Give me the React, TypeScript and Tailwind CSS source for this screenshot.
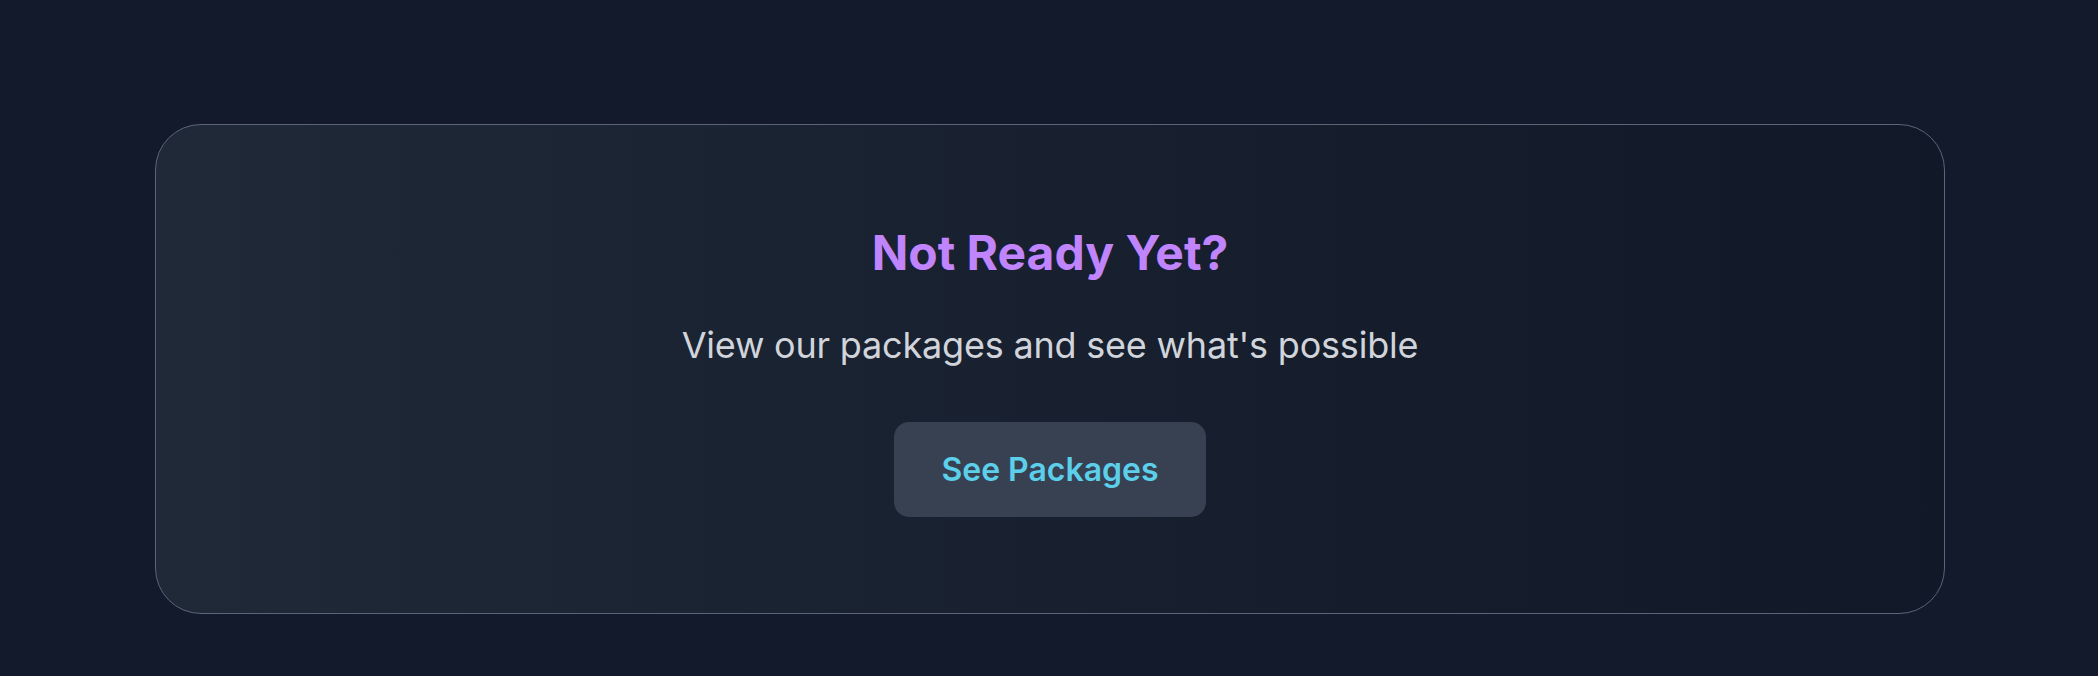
import React from 'react';

const App: React.FC = () => {
  return (
    <div className="min-h-[676px] w-full bg-[#131a2c] pl-[155px] pr-[153px] pt-[124px] pb-[61px] font-['Inter',sans-serif]">
      {/* CTA card */}
      <div className="flex flex-col items-center rounded-[46px] border-[1.5px] border-[#5b6478] bg-gradient-to-r from-[#1f2937] to-[#111827] pt-[100px] pb-[96px]">
        <h2 className="text-[48px] font-bold leading-[56px] text-[#c084fc]">Not Ready Yet?</h2>
        <p className="mt-[42px] text-[36px] font-normal leading-[44px] tracking-[-0.2px] text-[#d1d5db]">
          View our packages and see what's possible
        </p>
        <button className="mt-[55px] h-[95px] w-[312px] rounded-[15px] bg-[#374151] text-[32px] font-semibold text-[#5ccfea]">
          See Packages
        </button>
      </div>
    </div>
  );
};

export default App;
